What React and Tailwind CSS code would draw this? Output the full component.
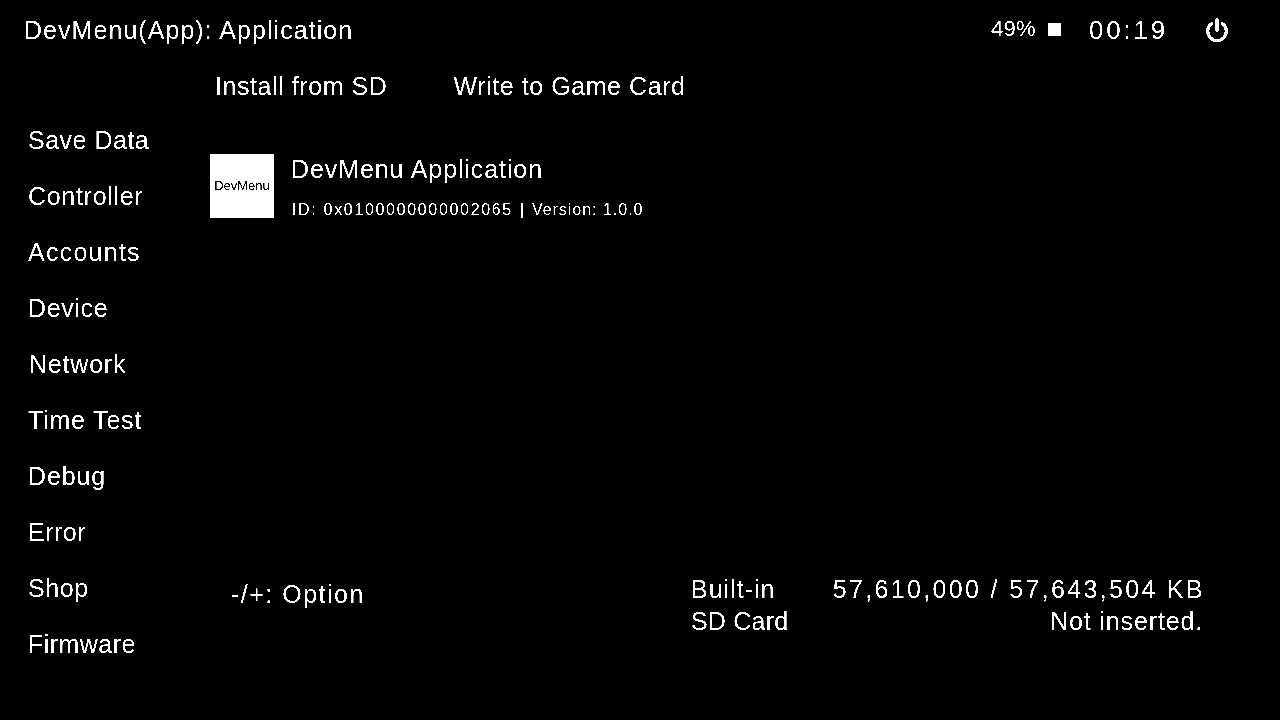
import React from "react";

const nav = [
  ["Save Data","tracking-[0.5px]"],
  ["Controller","tracking-[0.7px]"],
  ["Accounts","tracking-[1.25px]"],
  ["Device","tracking-[0.65px]"],
  ["Network","tracking-[0.8px] pl-px"],
  ["Time Test","tracking-[0.8px]"],
  ["Debug","tracking-[0.85px]"],
  ["Error","tracking-[0.5px]"],
  ["Shop","tracking-[0.6px]"],
  ["Firmware","tracking-[0.45px]"],
];

export default function App() {
  return (
    <div className="w-[1280px] h-[720px] bg-black text-white overflow-hidden flex flex-col font-['Liberation_Sans',Arial,sans-serif] text-[25px] leading-none tracking-[0.5px] contrast-[8]">
      <header className="h-[60px] flex items-center pl-6 pr-[51px] shrink-0">
        <div className="flex-1 tracking-[1.05px]">DevMenu(App): Application</div>
        <div className="text-[22px] tracking-[0.3px] -mt-[2px]">49%</div>
        <div className="w-[13px] h-[13px] bg-white ml-[12px] -mt-[2px]"></div>
        <div className="ml-[28px] tracking-[2.8px] text-[26px]">00:19</div>
        <svg className="ml-[37px]" width="24" height="24" viewBox="0 0 24 24" fill="none" stroke="white" strokeWidth="3.4" strokeLinecap="round">
          <path d="M12 2v10" />
          <path d="M6.5 5.8a9.3 9.3 0 1 0 11 0" />
        </svg>
      </header>
      <div className="flex flex-1 min-h-0">
        <nav className="w-[210px] shrink-0 pt-[52px] pl-7">
          {nav.map(([n, c]) => <div key={n} className={"h-14 flex items-center " + c}>{n}</div>)}
        </nav>
        <main className="flex-1 flex flex-col min-w-0">
          <div className="h-[52px] flex items-center gap-[66px] pl-[5px] tracking-[0.57px]">
            <span>Install from SD</span>
            <span>Write to Game Card</span>
          </div>
          <div className="flex mt-[42px]">
            <div className="w-16 h-16 bg-white text-black flex items-center justify-center text-[13px] tracking-[0px] pb-[2px]">DevMenu</div>
            <div className="ml-[17px]">
              <div className="mt-[3px] tracking-[0.9px]">DevMenu Application</div>
              <div className="mt-[20px] ml-px text-[16px] flex">
                <span className="tracking-[1.67px]">ID: 0x0100000000002065</span>
                <span className="ml-[7px] font-bold">|</span>
                <span className="ml-[7px] tracking-[0.98px]">Version: 1.0.0</span>
              </div>
            </div>
          </div>
          <div className="flex mt-[354px] pr-[75px]">
            <div className="w-[481px] pl-[21px] pt-[10px] tracking-[1.5px]">-/+: Option</div>
            <div className="flex-1 flex flex-col gap-[7px] pt-[5px]">
              <div className="flex justify-between"><span className="tracking-[1px]">Built-in</span><span className="tracking-[2.34px]">57,610,000 / 57,643,504 KB</span></div>
              <div className="flex justify-between"><span className="tracking-[0.2px]">SD Card</span><span className="tracking-[0.85px] mr-[2px]">Not inserted.</span></div>
            </div>
          </div>
        </main>
      </div>
    </div>
  );
}
